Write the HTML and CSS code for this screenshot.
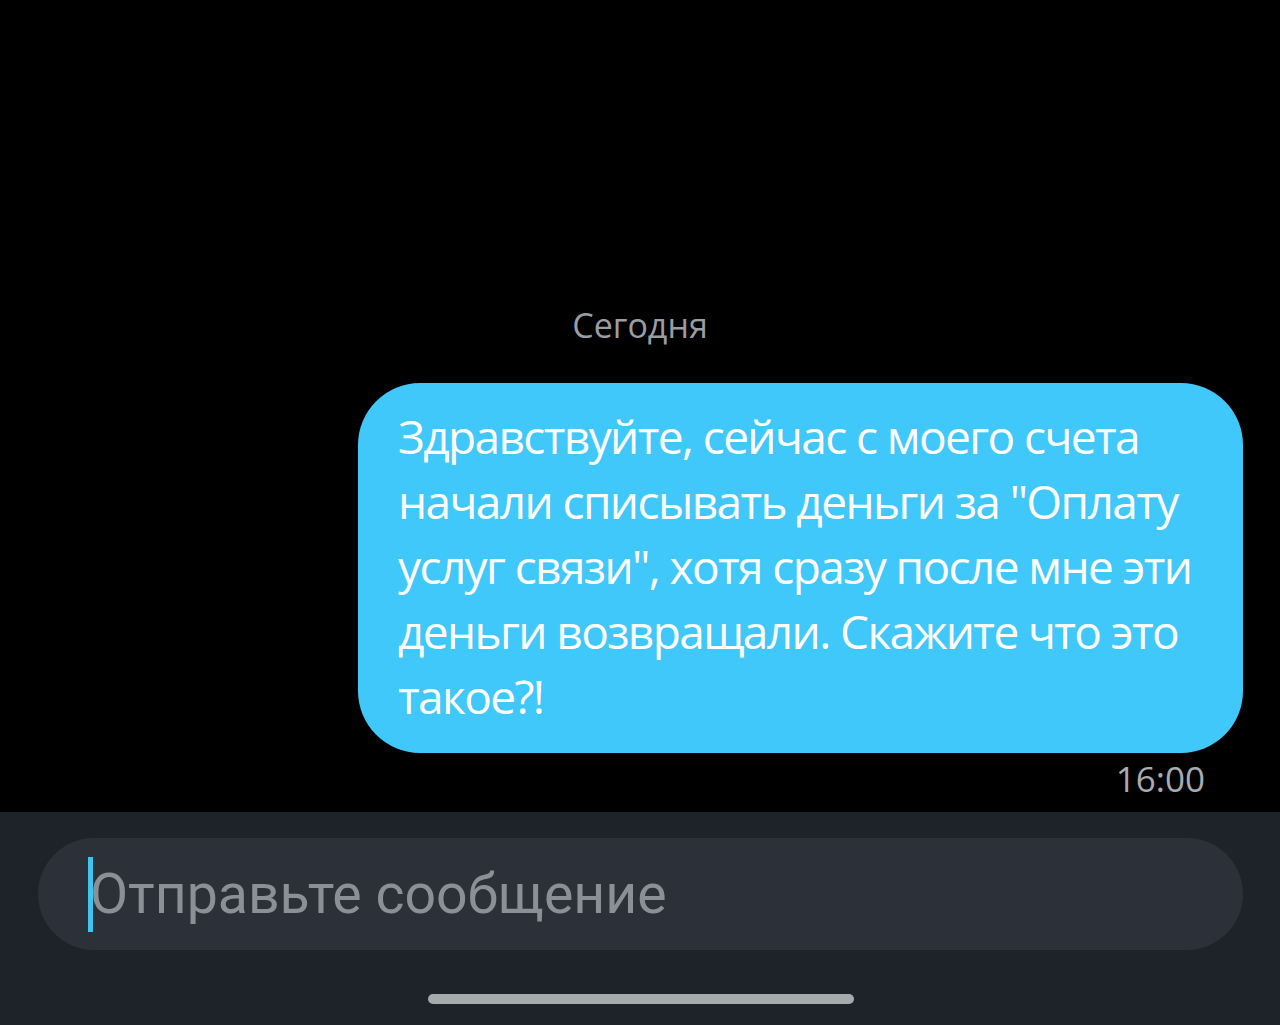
FILE: index.html
```html
<!DOCTYPE html>
<html lang="ru">
<head>
<meta charset="utf-8">
<title>Чат</title>
<link rel="stylesheet" href="styles.css">
</head>
<body>
<div class="screen">
  <main class="chat">
    <div class="date">Сегодня</div>
    <div class="bubble">Здравствуйте, сейчас с моего счета<br>начали списывать деньги за "Оплату<br>услуг связи", хотя сразу после мне эти<br>деньги возвращали. Скажите что это<br>такое?!</div>
    <div class="time">16:00</div>
  </main>
  <footer class="composer">
    <div class="input"><span class="caret"></span><span class="placeholder">Отправьте сообщение</span></div>
    <div class="home"></div>
  </footer>
</div>
</body>
</html>
```
FILE: styles.css
```css
html, body {
  margin: 0;
  padding: 0;
  background: #000;
}
.screen {
  width: 1280px;
  height: 1025px;
  display: flex;
  flex-direction: column;
  overflow: hidden;
}
.chat {
  flex: 1;
  display: flex;
  flex-direction: column;
  justify-content: flex-end;
  font-family: "Open Sans", "DejaVu Sans", sans-serif;
}
.date {
  align-self: center;
  color: #9a9ea3;
  font-size: 34px;
  font-stretch: 92%;
  line-height: 40px;
  margin-bottom: 38px;
}
.bubble {
  align-self: flex-end;
  margin-right: 37px;
  width: 885px;
  box-sizing: border-box;
  padding: 21px 30px 24px 40px;
  background: #40c8fa;
  border-radius: 62px;
  color: #fff;
  font-size: 46px;
  font-stretch: 92%;
  letter-spacing: -1.6px;
  line-height: 65px;
  white-space: nowrap;
}
.time {
  align-self: flex-end;
  margin-right: 75px;
  margin-top: 4px;
  margin-bottom: 11px;
  color: #a9abae;
  font-size: 35px;
  font-stretch: 92%;
  line-height: 44px;
}
.composer {
  height: 213px;
  background: #1e2229;
  box-sizing: border-box;
  padding: 26px 37px 0 38px;
  display: flex;
  flex-direction: column;
}
.input {
  height: 112px;
  border-radius: 56px;
  background: #2c3139;
  display: flex;
  align-items: center;
  padding-left: 50px;
}
.caret {
  width: 5px;
  height: 75px;
  background: #3fc3f0;
  margin-right: -3px;
}
.placeholder {
  font-family: Roboto, "Noto Sans", sans-serif;
  font-size: 55.4px;
  color: #8c9096;
}
.home {
  align-self: center;
  width: 426px;
  height: 10px;
  border-radius: 5px;
  background: #a7aaad;
  margin-top: 44px;
}
```
